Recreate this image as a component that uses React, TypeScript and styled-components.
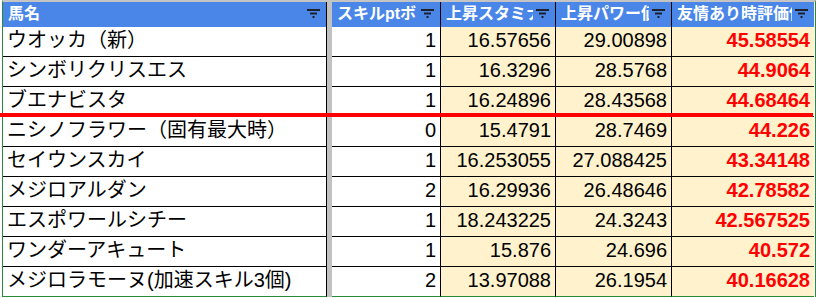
import React from "react";
import styled, { createGlobalStyle, css } from "styled-components";

const Global = createGlobalStyle`
  html, body { margin: 0; padding: 0; background: #ffffff; }
  body { font-family: "Liberation Sans", "Noto Sans CJK JP", sans-serif; }
`;

const BLUE = "#4a86e8";
const YELLOW = "#fff2cc";
const GREEN = "#2a8a3c";
const FONT = `"Liberation Sans", "Noto Sans CJK JP", sans-serif`;

const Sheet = styled.div`
  position: relative;
  margin-left: 2px;
  width: 812px;
  border-top: 2px solid #c4c4c4;
  border-left: 1px solid ${GREEN};
  border-right: 1px solid ${GREEN};
  display: grid;
  grid-template-columns: 324px 5px 109px 115px 116px 142px;
  grid-template-rows: 25px repeat(9, 30px);
  font-family: ${FONT};
`;

const FreezeBar = styled.div`
  grid-column: 2;
  grid-row: 1 / -1;
  background: #c2c2c2;
  margin-bottom: -1px;
`;

const HeadCell = styled.div<{ $last?: boolean }>`
  position: relative;
  box-sizing: border-box;
  background: ${BLUE};
  color: #ffffff;
  font-weight: bold;
  font-size: 16px;
  line-height: 24px;
  padding-left: 5px;
  white-space: nowrap;
  overflow: hidden;
  border-right: ${(p) => (p.$last ? "none" : "1px solid #000")};
`;

const FilterBox = styled.span`
  position: absolute;
  top: 0;
  bottom: 0;
  right: 3px;
  width: 19px;
  background: ${BLUE};
  display: flex;
  justify-content: center;
  padding-top: 7px;
  box-sizing: border-box;
`;

const Cell = styled.div<{
  $tone: "white" | "yellow";
  $align: "left" | "right";
  $lastCol?: boolean;
  $lastRow?: boolean;
  $red?: boolean;
}>`
  box-sizing: border-box;
  height: 30px;
  background: ${(p) => (p.$tone === "yellow" ? YELLOW : "#ffffff")};
  font-size: 20px;
  line-height: 26px;
  padding: 0 4px 3px 4px;
  white-space: nowrap;
  overflow: hidden;
  color: #000;
  text-align: ${(p) => p.$align};
  border-right: ${(p) => (p.$lastCol ? "none" : "1px solid #000")};
  border-bottom: 1px solid ${(p) => (p.$lastRow ? GREEN : "#000")};
  ${(p) =>
    p.$red &&
    css`
      color: #ff0000;
      font-weight: bold;
    `}
`;

const RedRule = styled.div`
  position: absolute;
  left: -3px;
  top: 111px;
  width: 813px;
  height: 4px;
  background: #ff0000;
`;

const FilterIcon = () => (
  <svg width="13" height="9" viewBox="0 0 13 9">
    <rect x="0" y="0" width="13" height="2" fill="#1e2127" />
    <rect x="3" y="3.5" width="7" height="2" fill="#1e2127" />
    <rect x="5.5" y="7" width="2" height="2" fill="#1e2127" />
  </svg>
);

type Row = [string, string, string, string, string];

const headers = ["馬名", "スキルptボ", "上昇スタミナ", "上昇パワー値", "友情あり時評価値"];

const rows: Row[] = [
  ["ウオッカ（新）", "1", "16.57656", "29.00898", "45.58554"],
  ["シンボリクリスエス", "1", "16.3296", "28.5768", "44.9064"],
  ["ブエナビスタ", "1", "16.24896", "28.43568", "44.68464"],
  ["ニシノフラワー（固有最大時）", "0", "15.4791", "28.7469", "44.226"],
  ["セイウンスカイ", "1", "16.253055", "27.088425", "43.34148"],
  ["メジロアルダン", "2", "16.29936", "26.48646", "42.78582"],
  ["エスポワールシチー", "1", "18.243225", "24.3243", "42.567525"],
  ["ワンダーアキュート", "1", "15.876", "24.696", "40.572"],
  ["メジロラモーヌ(加速スキル3個)", "2", "13.97088", "26.1954", "40.16628"],
];

const cols = [1, 3, 4, 5, 6];

export default function App() {
  return (
    <>
      <Global />
      <Sheet>
        <FreezeBar />
        {headers.map((h, i) => (
          <HeadCell
            key={h}
            $last={i === headers.length - 1}
            style={{ gridColumn: cols[i], gridRow: 1 }}
          >
            {h}
            <FilterBox>
              <FilterIcon />
            </FilterBox>
          </HeadCell>
        ))}
        {rows.map((r, ri) =>
          r.map((v, ci) => (
            <Cell
              key={`${ri}-${ci}`}
              style={{ gridColumn: cols[ci], gridRow: ri + 2 }}
              $tone={ci >= 2 ? "yellow" : "white"}
              $align={ci === 0 ? "left" : "right"}
              $lastCol={ci === 4}
              $lastRow={ri === rows.length - 1}
              $red={ci === 4}
            >
              {v}
            </Cell>
          ))
        )}
        <RedRule />
      </Sheet>
    </>
  );
}
